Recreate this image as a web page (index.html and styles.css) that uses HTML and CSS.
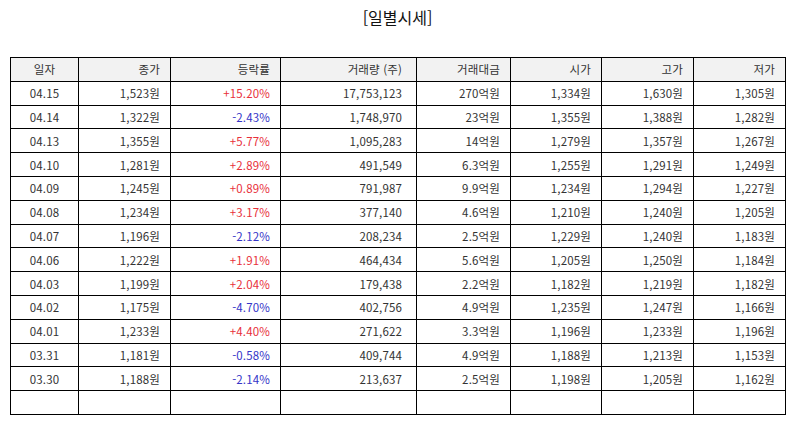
FILE: index.html
```html
<!DOCTYPE html>
<html lang="ko">
<head>
<meta charset="utf-8">
<title>일별시세</title>
<link rel="stylesheet" href="styles.css">
</head>
<body>
<h1 class="title">[일별시세]</h1>
<table class="daily">
<colgroup>
<col class="c-date"><col class="c-close"><col class="c-rate"><col class="c-vol"><col class="c-amt"><col class="c-open"><col class="c-high"><col class="c-low">
</colgroup>
<thead>
<tr><th class="center">일자</th><th>종가</th><th>등락률</th><th class="vol">거래량 (주)</th><th>거래대금</th><th>시가</th><th>고가</th><th>저가</th></tr>
</thead>
<tbody>
<tr><td class="center">04.15</td><td>1,523원</td><td class="up">+15.20%</td><td class="vol">17,753,123</td><td>270억원</td><td>1,334원</td><td>1,630원</td><td>1,305원</td></tr>
<tr><td class="center">04.14</td><td>1,322원</td><td class="down">-2.43%</td><td class="vol">1,748,970</td><td>23억원</td><td>1,355원</td><td>1,388원</td><td>1,282원</td></tr>
<tr><td class="center">04.13</td><td>1,355원</td><td class="up">+5.77%</td><td class="vol">1,095,283</td><td>14억원</td><td>1,279원</td><td>1,357원</td><td>1,267원</td></tr>
<tr><td class="center">04.10</td><td>1,281원</td><td class="up">+2.89%</td><td class="vol">491,549</td><td>6.3억원</td><td>1,255원</td><td>1,291원</td><td>1,249원</td></tr>
<tr><td class="center">04.09</td><td>1,245원</td><td class="up">+0.89%</td><td class="vol">791,987</td><td>9.9억원</td><td>1,234원</td><td>1,294원</td><td>1,227원</td></tr>
<tr><td class="center">04.08</td><td>1,234원</td><td class="up">+3.17%</td><td class="vol">377,140</td><td>4.6억원</td><td>1,210원</td><td>1,240원</td><td>1,205원</td></tr>
<tr><td class="center">04.07</td><td>1,196원</td><td class="down">-2.12%</td><td class="vol">208,234</td><td>2.5억원</td><td>1,229원</td><td>1,240원</td><td>1,183원</td></tr>
<tr><td class="center">04.06</td><td>1,222원</td><td class="up">+1.91%</td><td class="vol">464,434</td><td>5.6억원</td><td>1,205원</td><td>1,250원</td><td>1,184원</td></tr>
<tr><td class="center">04.03</td><td>1,199원</td><td class="up">+2.04%</td><td class="vol">179,438</td><td>2.2억원</td><td>1,182원</td><td>1,219원</td><td>1,182원</td></tr>
<tr><td class="center">04.02</td><td>1,175원</td><td class="down">-4.70%</td><td class="vol">402,756</td><td>4.9억원</td><td>1,235원</td><td>1,247원</td><td>1,166원</td></tr>
<tr><td class="center">04.01</td><td>1,233원</td><td class="up">+4.40%</td><td class="vol">271,622</td><td>3.3억원</td><td>1,196원</td><td>1,233원</td><td>1,196원</td></tr>
<tr><td class="center">03.31</td><td>1,181원</td><td class="down">-0.58%</td><td class="vol">409,744</td><td>4.9억원</td><td>1,188원</td><td>1,213원</td><td>1,153원</td></tr>
<tr><td class="center">03.30</td><td>1,188원</td><td class="down">-2.14%</td><td class="vol">213,637</td><td>2.5억원</td><td>1,198원</td><td>1,205원</td><td>1,162원</td></tr>
<tr class="empty"><td></td><td></td><td></td><td></td><td></td><td></td><td></td><td></td></tr>
</tbody>
</table>
</body>
</html>
```
FILE: styles.css
```css
html, body {
  margin: 0;
  padding: 0;
  background: #ffffff;
}
body {
  font-family: "Noto Sans CJK KR", "Noto Sans", sans-serif;
  color: #333333;
  padding: 0 9px 0 10px;
}
.title {
  margin: 0;
  padding-top: 5px;
  height: 57px;
  box-sizing: border-box;
  text-align: center;
  font-size: 16px;
  font-weight: 400;
  line-height: 24px;
  color: #111111;
}
.daily {
  width: 775px;
  border-collapse: collapse;
  table-layout: fixed;
  font-size: 11.5px;
  letter-spacing: 0.15px;
}
.c-date { width: 68px; }
.c-close { width: 92px; }
.c-rate { width: 110px; }
.c-vol { width: 136px; }
.c-amt { width: 94px; }
.c-open { width: 91px; }
.c-high { width: 92px; }
.c-low { width: 92px; }
.daily th,
.daily td {
  border: 1px solid #000000;
  height: 23.8px;
  padding: 0 10px 0 4px;
  text-align: right;
  font-weight: 400;
  line-height: 14px;
  white-space: nowrap;
  box-sizing: border-box;
}
.daily th {
  background: #f2f2f2;
  color: #333333;
}
.daily .vol {
  padding-right: 14px;
}
.daily .center {
  text-align: center;
  padding: 0;
}
.daily .up { color: #e8303a; }
.daily .down { color: #3535c8; }
```
